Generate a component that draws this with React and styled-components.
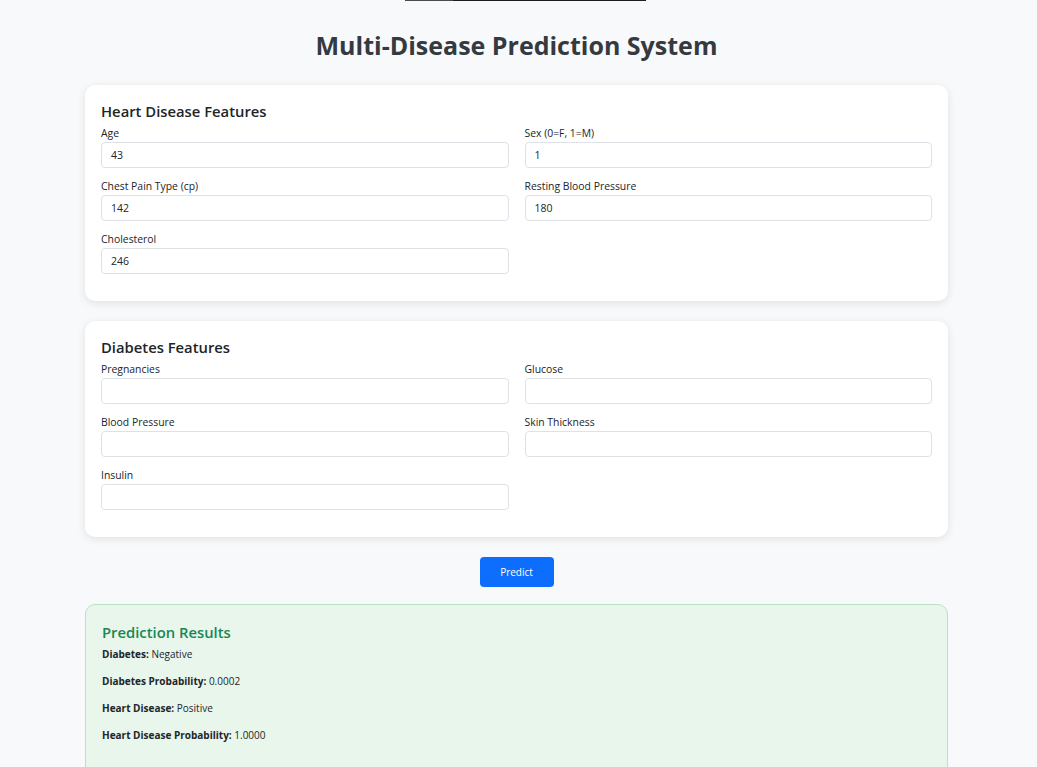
import styled, { createGlobalStyle } from 'styled-components';

const GlobalStyle = createGlobalStyle`
  html, body {
    margin: 0;
    padding: 0;
    background: #f8f9fa;
    font-family: "Open Sans", "Noto Sans", sans-serif;
    color: #212529;
  }
  * { box-sizing: border-box; }
`;

const Page = styled.div`
  padding: 0 4px 0 0;
`;

/* bottom edge of something scrolled out above */
const TopEdge = styled.div`
  width: 241px;
  height: 1px;
  margin-left: calc(50% - 112px);
  background: linear-gradient(to right, #4d4b49 0 48px, #1d1d1f 48px);
`;

const Wrapper = styled.div`
  max-width: 863px;
  margin: 0 auto;
`;

const Title = styled.h1`
  margin: 28px 0 24px;
  text-align: center;
  font-size: 25px;
  font-weight: 700;
  line-height: 32px;
  color: #343a40;
`;

const Card = styled.section`
  background: #fff;
  border-radius: 10px;
  box-shadow: 0 2px 8px rgba(0, 0, 0, 0.1);
  padding: 16px;
  margin-bottom: 20px;
`;

const CardTitle = styled.h2`
  margin: 0 0 4px;
  font-size: 14.8px;
  font-weight: 600;
  line-height: 21px;
  color: #212529;
`;

const Grid = styled.div`
  display: grid;
  grid-template-columns: 1fr 1fr;
  column-gap: 16px;
`;

const Field = styled.div`
  display: flex;
  flex-direction: column;
  margin-bottom: 11px;
`;

const Label = styled.label`
  font-size: 10.4px;
  line-height: 14px;
  margin-bottom: 2px;
  color: #212529;
`;

const Input = styled.input`
  height: 26px;
  padding: 0 9px;
  border: 1px solid #dee2e6;
  border-radius: 4px;
  font-family: inherit;
  font-size: 10.5px;
  color: #212529;
  background: #fff;
  outline: none;
`;

const Actions = styled.div`
  display: flex;
  justify-content: center;
  margin: 1px 0 17px;
`;

const Button = styled.button`
  width: 74px;
  height: 30px;
  border: none;
  border-radius: 4px;
  background: #0d6efd;
  color: #fff;
  font-family: inherit;
  font-size: 10px;
  cursor: pointer;
`;

const Results = styled.section`
  background: #e8f6ec;
  border: 1px solid #b8e3c5;
  border-radius: 10px;
  padding: 16px 16px 20px;
  min-height: 170px;
`;

const ResultsTitle = styled.h3`
  margin: 0 0 4px;
  font-size: 14.8px;
  font-weight: 600;
  line-height: 22px;
  color: #198754;
`;

const ResultLine = styled.p`
  margin: 0 0 13px;
  font-size: 10px;
  line-height: 14px;
  color: #212529;
  b { font-weight: 700; }
`;

const heart = [
  { label: 'Age', value: '43' },
  { label: 'Sex (0=F, 1=M)', value: '1' },
  { label: 'Chest Pain Type (cp)', value: '142' },
  { label: 'Resting Blood Pressure', value: '180' },
  { label: 'Cholesterol', value: '246' },
];

const diabetes = [
  { label: 'Pregnancies', value: '' },
  { label: 'Glucose', value: '' },
  { label: 'Blood Pressure', value: '' },
  { label: 'Skin Thickness', value: '' },
  { label: 'Insulin', value: '' },
];

const results = [
  ['Diabetes:', 'Negative'],
  ['Diabetes Probability:', '0.0002'],
  ['Heart Disease:', 'Positive'],
  ['Heart Disease Probability:', '1.0000'],
];

const FeatureCard = ({ title, fields }) => (
  <Card>
    <CardTitle>{title}</CardTitle>
    <Grid>
      {fields.map((f) => (
        <Field key={f.label}>
          <Label>{f.label}</Label>
          <Input type="text" defaultValue={f.value} />
        </Field>
      ))}
    </Grid>
  </Card>
);

export default function App() {
  return (
    <Page>
      <GlobalStyle />
      <TopEdge />
      <Wrapper>
        <Title>Multi-Disease Prediction System</Title>
        <FeatureCard title="Heart Disease Features" fields={heart} />
        <FeatureCard title="Diabetes Features" fields={diabetes} />
        <Actions>
          <Button>Predict</Button>
        </Actions>
        <Results>
          <ResultsTitle>Prediction Results</ResultsTitle>
          {results.map(([k, v]) => (
            <ResultLine key={k}>
              <b>{k}</b> {v}
            </ResultLine>
          ))}
        </Results>
      </Wrapper>
    </Page>
  );
}
